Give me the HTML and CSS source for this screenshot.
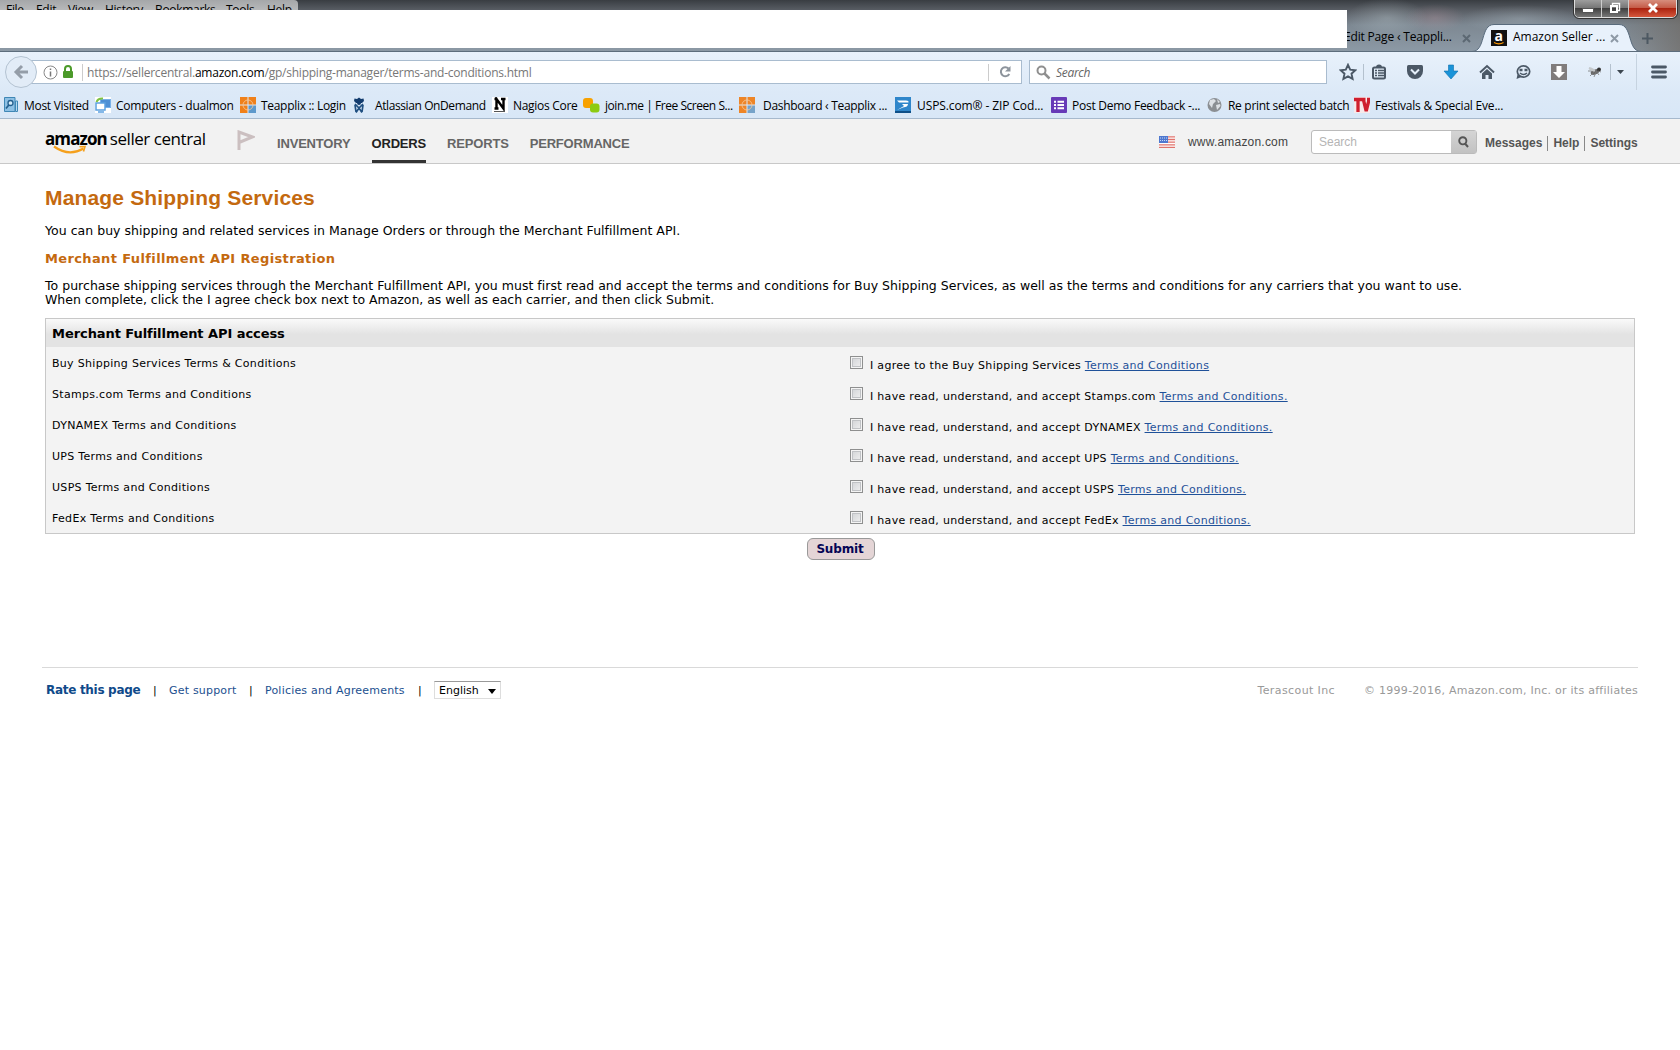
FILE: index.html
```
<!DOCTYPE html>
<html lang="en">
<head>
  <meta charset="UTF-8">
  <title>Amazon Seller Central</title>
  <link rel="stylesheet" href="styles.css">
</head>
<body>
  <div class="titlebar">
    <div class="menu">
      <span>File</span><span>Edit</span><span>View</span><span>History</span><span>Bookmarks</span><span>Tools</span><span>Help</span>
    </div>
    <div class="tabs">
      <div class="tab">
        <span class="tab-title edit">Edit Page ‹ Teappli...</span>
        <svg class="tab-close" width="9" height="9" viewBox="0 0 9 9"><path d="M1 1l7 7M8 1l-7 7"/></svg>
      </div>
      <div class="tab active">
        <svg class="tab-shape" width="170" height="28" viewBox="0 0 170 28">
          <path d="M0 27.5C14 27.5 8 .5 22 .5H147C161 .5 155 27.500 169 27.500V28H0Z" fill="#e8f1fb" stroke="#596b7c"/>
        </svg>
        <svg class="favicon" width="16" height="16" viewBox="0 0 16 16">
          <rect width="16" height="16" fill="#111"/>
          <text x="3.4" y="10.5" font-family="Open Sans" font-weight="700" font-size="14" fill="#fff">a</text>
          <path d="M3 12.5q5 2.6 9.500 0" fill="none" stroke="#f90" stroke-width="1.200"/>
        </svg>
        <span class="tab-title seller">Amazon Seller ...</span>
        <svg class="tab-close" width="9" height="9" viewBox="0 0 9 9"><path d="M1 1l7 7M8 1l-7 7"/></svg>
      </div>
      <svg class="new-tab" width="11" height="11" viewBox="0 0 11 11"><path d="M5.500 0v11M0 5.500h11"/></svg>
    </div>
    <div class="window-buttons">
      <span class="wb"><svg width="12" height="12" viewBox="0 0 12 12"><rect x=".5" y="6.500" width="11" height="4" fill="#fff" stroke="#555"/></svg></span>
      <span class="wb"><svg width="12" height="12" viewBox="0 0 12 12"><path d="M3.500 3V1.500h7v7H9" fill="none" stroke="#fff" stroke-width="1.400"/><rect x="2" y="4" width="6" height="6" fill="none" stroke="#fff" stroke-width="2"/></svg></span>
      <span class="wb wb-close"><svg width="12" height="12" viewBox="0 0 12 12"><path d="M2 2l8 8M10 2l-8 8" stroke="#fff" stroke-width="2.800"/></svg></span>
    </div>
    <div class="blank"></div>
  </div>

  <div class="toolbar">
    <div class="back">
      <svg width="16" height="16" viewBox="0 0 16 16"><path d="M9 2L3 8l6 6M3 8h12" fill="none" stroke="#949da8" stroke-width="3"/></svg>
    </div>
    <div class="urlbar">
      <svg class="info" width="15" height="15" viewBox="0 0 15 15"><circle cx="7.500" cy="7.500" r="6.500" fill="none" stroke="#888"/><path d="M7.500 3.500v1.600M7.500 6.500v5" stroke="#777" stroke-width="1.500"/></svg>
      <svg class="lock" width="12" height="14" viewBox="0 0 12 14"><path d="M3 7V4a3 3 0 0 1 6 0v3" fill="none" stroke="#4c9a2a" stroke-width="2"/><rect x="1" y="6" width="10" height="7" rx="1" fill="#4c9a2a"/></svg>
      <span class="url">https://sellercentral.<b>amazon.com</b>/gp/shipping-manager/terms-and-conditions.html</span>
      <span class="reload"><svg width="14" height="14" viewBox="0 0 14 14"><path d="M10.500 3.500A4.500 4.500 0 1 0 11.300 9" fill="none" stroke="#8d949c" stroke-width="2"/><path d="M12.500 1v5.500H7z" fill="#8d949c"/></svg></span>
    </div>
    <div class="searchbar">
      <svg width="15" height="15" viewBox="0 0 15 15"><circle cx="5.500" cy="5.500" r="4" fill="none" stroke="#8f8f8f" stroke-width="2"/><path d="M8.500 8.500l5 5" stroke="#8f8f8f" stroke-width="2.500"/></svg>
      <span>Search</span>
    </div>
    <div class="tools">
      <svg width="18" height="18" viewBox="0 0 18 18"><path d="M9 1.800l2.200 4.800 5.200.6-3.900 3.500 1.100 5.200L9 13.300l-4.600 2.600 1.100-5.200L1.600 7.200l5.200-.6z" fill="none" stroke="#4b5866" stroke-width="1.900"/></svg>
      <i class="sep s1"></i>
      <svg width="16" height="16" viewBox="0 0 16 16"><rect x="2" y="3.500" width="12" height="11" rx="1.500" fill="none" stroke="#4b5866" stroke-width="2"/><path d="M5 3.500a3 3 0 0 1 6 0z" fill="#4b5866"/><path d="M4 6.500h2M7 6.500h6M4 9h2M7 9h6M4 11.500h2M7 11.500h6" stroke="#4b5866" stroke-width="1.400"/></svg>
      <svg width="18" height="16" viewBox="0 0 18 16"><path d="M1 2.500q0-1.500 1.500-1.500h13q1.500 0 1.500 1.500V7a8 8 0 0 1-16 0z" fill="#4b5866"/><path d="M5 5.500l4 4 4-4" fill="none" stroke="#e5effa" stroke-width="2"/></svg>
      <svg width="16" height="16" viewBox="0 0 16 16"><path d="M5.500 1h5v6H15l-7 8-7-8h4.500z" fill="#1a93d8" stroke="#0a6fae" stroke-width=".6"/></svg>
      <svg width="16" height="16" viewBox="0 0 16 16"><path d="M1 8.500L8 2l7 6.500" fill="none" stroke="#4b5866" stroke-width="2"/><path d="M3 9.500L8 5l5 4.500V15H9.500v-4h-3v4H3z" fill="#4b5866"/></svg>
      <svg width="16" height="16" viewBox="0 0 16 16"><ellipse cx="8.500" cy="7.500" rx="6.200" ry="5.600" fill="none" stroke="#4b5866" stroke-width="1.700"/><path d="M2.500 10.500L1.500 15l5-2z" fill="#4b5866"/><path d="M4.500 6h3M9.500 6h3" stroke="#4b5866" stroke-width="2.500"/><path d="M5 9q3.500 3 7 0" fill="none" stroke="#4b5866" stroke-width="1.500"/></svg>
      <svg width="16" height="16" viewBox="0 0 16 16"><rect width="16" height="16" fill="#807c7c"/><path d="M5.500 2h5v6H14l-6 6-6-6h3.500z" fill="#fff"/></svg>
      <svg width="16" height="16" viewBox="0 0 16 16"><ellipse cx="8" cy="8" rx="4.500" ry="2.400" fill="#686868" transform="rotate(-20 8 8)"/><circle cx="12" cy="5.500" r="2" fill="#333"/><path d="M2 4l6 3M1 7l5 0M3 12l4-4M7 13l2-5M12 11l-3-4M14 8l-3-1" stroke="#777" stroke-width=".8"/><ellipse cx="5" cy="5.500" rx="3.500" ry="1.500" fill="#c4c8cb" transform="rotate(25 5 5.500)"/></svg>
      <i class="sep s2"></i>
      <svg class="drop" width="7" height="4" viewBox="0 0 7 4"><path d="M0 0h7L3.500 4z" fill="#3c4650"/></svg>
      <i class="sep s3"></i>
      <svg width="16" height="14" viewBox="0 0 16 14"><path d="M1.500 2h13M1.500 7h13M1.500 12h13" stroke="#4b5866" stroke-width="2.800" stroke-linecap="round"/></svg>
    </div>
  </div>

  <div class="bookmarks">
    <div class="bm"><svg width="15" height="16" viewBox="0 0 15 16"><path d="M.5.500H11v14H.5z" fill="#8dc0e4" stroke="#3f87b5"/><path d="M11.500 4h2v10.500h-2z" fill="#b7daf0" stroke="#3f87b5"/><circle cx="6.500" cy="6" r="2.500" fill="#d6ecfa" stroke="#235f8e" stroke-width="1.300"/><path d="M4.800 8L2 11.500" stroke="#235f8e" stroke-width="1.700"/></svg><span>Most Visited</span></div>
    <div class="bm"><svg width="16" height="16" viewBox="0 0 16 16"><rect width="16" height="16" fill="#fff"/><rect x="5.500" y="2.500" width="10" height="8" fill="#4d8fd4" stroke="#79b1e8"/><rect x="1" y="6" width="9" height="7" fill="#fff" stroke="#5ba1e0" stroke-width="1.500"/><path d="M3 15h6" stroke="#5ba1e0" stroke-width="1.500"/><path d="M1.500 5Q3 1 8 1.500" stroke="#7ec242" stroke-width="2" fill="none"/></svg><span>Computers - dualmon</span></div>
    <div class="bm"><svg width="16" height="16" viewBox="0 0 16 16"><path d="M0 0h7.500v7.500H0zM8.500 0H16v7.500H8.500zM0 8.500h7.500V16H0z" fill="#f08019"/><path d="M8.500 8.500H16V16H8.500z" fill="#5d99cc"/><circle cx="8" cy="8" r="5" fill="none" stroke="#f8c99a" stroke-width=".8"/></svg><span>Teapplix :: Login</span></div>
    <div class="bm"><svg width="16" height="16" viewBox="2 0 16 16"><path d="M3.500 1.500L6 2l2-1.500L10 2l2.500-.5.5 2.500-2 2H5L3 4z" fill="#123b6d"/><circle cx="8" cy="6" r="2" fill="#123b6d"/><path d="M4 7l4 4 4-4M5 15.500L8 11l3 4.500M4 8l1 7M12 8l-1 7" fill="none" stroke="#205081" stroke-width="1.700"/></svg><span>Atlassian OnDemand</span></div>
    <div class="bm"><svg width="16" height="16" viewBox="0 0 16 16"><rect width="16" height="16" fill="#fff"/><path d="M4.500 12V2l7 9.500V1.500M2.500 11.500h4M9 2h4.500M2.500 2h3" fill="none" stroke="#000" stroke-width="2.400"/><path d="M2 14.500h11" stroke="#555"/></svg><span>Nagios Core</span></div>
    <div class="bm"><svg width="17" height="16" viewBox="0 0 17 16"><rect x="0" y="1" width="10" height="10" rx="3" fill="#f7a100"/><rect x="7" y="6.500" width="9.500" height="9" rx="3" fill="#8ccb12"/></svg><span>join.me | Free Screen S...</span></div>
    <div class="bm"><svg width="16" height="16" viewBox="0 0 16 16"><path d="M0 0h7.500v7.500H0zM8.500 0H16v7.500H8.500zM0 8.500h7.500V16H0z" fill="#ee8526"/><path d="M8.500 8.500H16V16H8.500z" fill="#76a3c9"/><circle cx="8" cy="8" r="5" fill="none" stroke="#f8c99a" stroke-width=".8"/></svg><span>Dashboard ‹ Teapplix ...</span></div>
    <div class="bm"><svg width="16" height="16" viewBox="0 0 16 16"><rect width="16" height="16" fill="#2f86ca"/><path d="M2 3.500h9q3 0 2.500 2H4zM7 7h6q0 3-5 3.500L2 13l7-4z" fill="#fff"/><path d="M0 15h16" stroke="#0f5088" stroke-width="2"/></svg><span>USPS.com® - ZIP Cod...</span></div>
    <div class="bm"><svg width="16" height="16" viewBox="0 0 16 16"><rect width="16" height="16" rx="1" fill="#673ab7"/><path d="M3 4.700h2M6.500 4.700H13M3 8h2M6.500 8H13M3 11.300h2M6.500 11.300H13" stroke="#fff" stroke-width="2"/></svg><span>Post Demo Feedback -...</span></div>
    <div class="bm"><svg width="16" height="16" viewBox="0 0 16 16"><circle cx="7.500" cy="8" r="7" fill="#8b8f93"/><path d="M3 3l4-1 2 2-3 3-1 4-3-4zM9 8l4-1 .5 2L10 13zM10 2l3 3-2 1z" fill="#dde1e5"/></svg><span>Re print selected batch</span></div>
    <div class="bm"><svg width="16" height="16" viewBox="0 0 16 16"><rect width="16" height="16" fill="#f7e9ea"/><path d="M0 2.500h9M4 2.500V15M8.500 2.500h3M13 2.500h3M9.500 3l2.700 11L15 3" fill="none" stroke="#cf1f2e" stroke-width="3.300"/></svg><span>Festivals &amp; Special Eve...</span></div>
  </div>

  <div class="header">
    <div class="logo">
      <b>amazon</b><span>seller central</span>
      <svg class="smile" width="36" height="10" viewBox="0 0 36 10"><path d="M1 1.500Q16 12 30.500 3.500" fill="none" stroke="#f5a01c" stroke-width="2.200"/><path d="M26.500 1.800l5.500-.3-1.500 5" fill="none" stroke="#f5a01c" stroke-width="1.600"/></svg>
    </div>
    <svg class="flag" width="18" height="21" viewBox="0 0 18 21"><path d="M2 20V2l13.500 5L2 12.500" fill="none" stroke="#cbbfc0" stroke-width="3"/></svg>
    <div class="nav">
      <a>INVENTORY</a>
      <a class="current">ORDERS</a>
      <a>REPORTS</a>
      <a>PERFORMANCE</a>
    </div>
    <svg class="us" width="16" height="12" viewBox="0 0 16 12"><rect width="16" height="12" fill="#fff"/><path d="M0 .8h16M0 3.500h16M0 6.200h16M0 8.800h16M0 11.300h16" stroke="#e0736c" stroke-width="1.300"/><rect width="9" height="7" fill="#4f78cf"/><path d="M1 2h7M1 4.500h7" stroke="#c9d8f7" stroke-dasharray="1 1"/></svg>
    <span class="site">www.amazon.com</span>
    <div class="site-search">
      <span>Search</span>
      <div class="go"><svg width="11" height="12" viewBox="0 0 11 12"><circle cx="4.800" cy="4.800" r="3.600" fill="none" stroke="#555" stroke-width="1.900"/><path d="M7 7.500l3 3.500" stroke="#555" stroke-width="2"/></svg></div>
    </div>
    <div class="links"><a>Messages</a><a>Help</a><a>Settings</a></div>
  </div>

  <div class="content">
    <h1>Manage Shipping Services</h1>
    <p class="intro">You can buy shipping and related services in Manage Orders or through the Merchant Fulfillment API.</p>
    <h2>Merchant Fulfillment API Registration</h2>
    <p class="desc"><span class="l1">To purchase shipping services through the Merchant Fulfillment API, you must first read and accept the terms and conditions for Buy Shipping Services, as well as the terms and conditions for any carriers that you want to use.</span><br><span class="l2">When complete, click the I agree check box next to Amazon, as well as each carrier, and then click Submit.</span></p>

    <div class="panel">
      <div class="panel-head"><span>Merchant Fulfillment API access</span></div>
      <div class="row"><span class="name">Buy Shipping Services Terms &amp; Conditions</span><i class="check"></i><span class="agree">I agree to the Buy Shipping Services <a>Terms and Conditions</a></span></div>
      <div class="row"><span class="name">Stamps.com Terms and Conditions</span><i class="check"></i><span class="agree">I have read, understand, and accept Stamps.com <a>Terms and Conditions.</a></span></div>
      <div class="row"><span class="name">DYNAMEX Terms and Conditions</span><i class="check"></i><span class="agree">I have read, understand, and accept DYNAMEX <a>Terms and Conditions.</a></span></div>
      <div class="row"><span class="name">UPS Terms and Conditions</span><i class="check"></i><span class="agree">I have read, understand, and accept UPS <a>Terms and Conditions.</a></span></div>
      <div class="row"><span class="name">USPS Terms and Conditions</span><i class="check"></i><span class="agree">I have read, understand, and accept USPS <a>Terms and Conditions.</a></span></div>
      <div class="row"><span class="name">FedEx Terms and Conditions</span><i class="check"></i><span class="agree">I have read, understand, and accept FedEx <a>Terms and Conditions.</a></span></div>
    </div>
    <button class="submit">Submit</button>
  </div>

  <div class="footer">
    <a class="rate">Rate this page</a><i>|</i>
    <a class="support">Get support</a><i>|</i>
    <a class="policies">Policies and Agreements</a><i>|</i>
    <div class="lang"><span>English</span><svg width="8" height="5" viewBox="0 0 8 5"><path d="M0 0h8L4 5z"/></svg></div>
    <span class="company">Terascout Inc</span>
    <span class="copy">© 1999-2016, Amazon.com, Inc. or its affiliates</span>
  </div>
</body>
</html>
```
FILE: styles.css
```
* {
  box-sizing: border-box;
}

body {
  margin: 0;
  background: #fff;
  color: #000;
  font-family: "DejaVu Sans", sans-serif;
  font-size: 11px;
  height: 1050px;
  overflow: hidden;
}

svg {
  display: block;
  flex: none;
}

span, a {
  white-space: nowrap;
}

/* browser title bar */
.titlebar {
  position: relative;
  height: 52px;
  display: flex;
  align-items: flex-start;
  overflow: hidden;
  font: 12px "Open Sans", sans-serif;
  border-bottom: 1px solid #5d6d7c;
  background:
    radial-gradient(ellipse 60px 14px at 1520px 19px, rgba(190, 205, 215, .3), transparent),
    radial-gradient(ellipse 30px 14px at 1435px 18px, rgba(190, 150, 160, .3), transparent),
    radial-gradient(ellipse 40px 20px at 1387px 18px, rgba(200, 215, 220, .3), transparent),
    linear-gradient(90deg, transparent 1610px, rgba(110, 105, 100, .7) 1680px),
    linear-gradient(#393d42, #5b6067 11px, #7d8892 25px, #8c99a5 51px);
}

.menu {
  display: flex;
  width: 298px;
  height: 20px;
  padding-left: 6px;
  line-height: 20px;
  background: linear-gradient(#a5a7a9, #c9cacb);
  border-radius: 0 4px 0 0;
  letter-spacing: -.3px;
}

.menu span:nth-child(1) { width: 30px; }
.menu span:nth-child(2) { width: 32px; }
.menu span:nth-child(3) { width: 37px; }
.menu span:nth-child(4) { width: 50px; }
.menu span:nth-child(5) { width: 71px; }
.menu span:nth-child(6) { width: 41px; }

.blank {
  position: absolute;
  left: 0;
  top: 10px;
  width: 1347px;
  height: 38px;
  background: #fff;
}

.tabs {
  display: flex;
  align-items: center;
  height: 28px;
  margin: 24px 0 0 1046px;
}

.tab {
  position: relative;
  display: flex;
  align-items: center;
  height: 28px;
  line-height: 26px;
}

.tab-title {
  position: relative;
  align-self: flex-start;
}

.edit {
  width: 118px;
  letter-spacing: -.18px;
}

.seller { width: 97px; }

.tab-close path, .new-tab path {
  stroke: #5c6873;
  stroke-width: 2;
  fill: none;
}

.tab-close { position: relative; }

.active {
  padding-left: 21px;
  margin-left: -1px;
  width: 170px;
}

.active .tab-close path { stroke: #8e9aa6; }

.tab-shape {
  position: absolute;
  left: 2px;
  top: 0;
}

.favicon {
  position: relative;
  margin-right: 6px;
}

.new-tab {
  position: relative;
  margin-left: 2px;
}

.new-tab path { stroke: #4d5862; }

.window-buttons {
  position: absolute;
  right: 3px;
  top: -2px;
  display: flex;
  height: 20px;
  border: 1px solid #ddd;
  outline: 1px solid #333;
  border-radius: 0 0 5px 5px;
  overflow: hidden;
}

.wb {
  display: flex;
  align-items: center;
  justify-content: center;
  width: 27px;
  border-right: 1px solid #ccc;
  background: linear-gradient(#a2a2a2, #777 48%, #3c3c3c 50%, #777);
}

.wb-close {
  width: 47px;
  border: 0;
  background: linear-gradient(#d99484, #c55c48 48%, #a9200d 50%, #d5573c);
}

/* navigation toolbar */
.toolbar {
  display: flex;
  align-items: center;
  height: 40px;
  padding-left: 5px;
  background: linear-gradient(#e8f1fb, #dce9f7);
  font: 12px "Open Sans", sans-serif;
}

.back {
  position: relative;
  z-index: 1;
  display: flex;
  flex: none;
  align-items: center;
  justify-content: center;
  width: 32px;
  height: 32px;
  border: 1px solid #b4c3d2;
  border-radius: 50%;
  background: #e2ecf7;
}

.urlbar {
  display: flex;
  flex: none;
  align-items: center;
  width: 992px;
  height: 24px;
  margin-left: -7px;
  padding-left: 12px;
  border: 1px solid #a9bccf;
  background: #fff;
}

.lock { margin: 0 8px 0 4px; }

.url {
  flex: 1;
  padding-left: 4px;
  border-left: 1px solid #ccc;
  color: #777;
  letter-spacing: -.23px;
}

.url b {
  font-weight: 400;
  color: #000;
}

.reload {
  width: 33px;
  height: 17px;
  padding: 1px 0 0 9px;
  border-left: 1px solid #ccc;
}

.searchbar {
  display: flex;
  flex: none;
  align-items: center;
  gap: 5px;
  width: 298px;
  height: 24px;
  margin-left: 7px;
  padding-left: 6px;
  border: 1px solid #a9bccf;
  background: #fff;
  color: #666;
  font-style: italic;
  letter-spacing: -.3px;
}

.tools {
  display: flex;
  flex: none;
  align-items: center;
  margin-left: 12px;
  height: 40px;
}

.tools > svg { margin-right: 20px; }
.tools > svg:first-child { margin-right: 6px; }
.tools > svg:nth-child(4) { margin: 0 19px 0 -1px; }
.tools > svg:nth-child(9) { margin-right: 7px; }
.tools > svg:last-child { margin-right: 0; }

.sep {
  width: 1px;
  height: 16px;
  background: #b4c1ce;
}

.s1 { margin-right: 7px; }
.s2 { margin-right: 6px; }
.tools > .drop { margin-right: 12px; }

.s3 {
  height: 36px;
  margin-right: 14px;
  background: #c6d3e0;
}

.bookmarks {
  display: flex;
  align-items: center;
  height: 27px;
  padding-left: 4px;
  background: linear-gradient(#dce9f7, #d8e7f7);
  border-bottom: 1px solid #a6b9cd;
  font: 12px "Open Sans", sans-serif;
}

.bm {
  display: flex;
  align-items: center;
  flex: none;
  gap: 5px;
  width: 156px;
  letter-spacing: -.3px;
}

.bm:nth-child(1) { width: 91px; }
.bm:nth-child(2) { width: 145px; letter-spacing: -.25px; }
.bm:nth-child(3) { width: 113px; }
.bm:nth-child(4) { width: 139px; gap: 6px; letter-spacing: -.4px; }
.bm:nth-child(5) { width: 91px; }
.bm:nth-child(6) { letter-spacing: -.45px; }
.bm:nth-child(7) { gap: 8px; }
.bm:nth-child(8) { gap: 6px; letter-spacing: -.1px; }
.bm:nth-child(9) { letter-spacing: -.25px; }
.bm:nth-child(10) { width: 147px; }
.bm:nth-child(11) { letter-spacing: -.2px; }

/* seller central header */
.header {
  display: flex;
  height: 45px;
  padding-left: 45px;
  background: #f2f2f2;
  border-bottom: 1px solid #c8c8c8;
  font-family: "Liberation Sans", sans-serif;
}

.logo {
  position: relative;
  width: 192px;
  padding-top: 8px;
  font: 17px/24px "Open Sans", sans-serif;
  letter-spacing: -.9px;
}

.logo b { margin-right: 3px; }
.logo span { letter-spacing: -.45px; }

.smile {
  position: absolute;
  left: 8px;
  top: 26px;
}

.flag { margin-top: 11px; }

.nav {
  display: flex;
  gap: 21px;
  width: 882px;
  margin-left: 22px;
}

.nav a {
  height: 44px;
  padding-top: 17px;
  font-size: 13px;
  line-height: 15px;
  font-weight: bold;
  color: #666;
  letter-spacing: -.18px;
}

.nav .current {
  color: #222;
  border-bottom: 3px solid #333;
}

.us { margin-top: 17px; }

.site {
  width: 123px;
  margin: 15px 0 0 13px;
  font-size: 12px;
  line-height: 16px;
  color: #444;
  letter-spacing: .2px;
}

.site-search {
  display: flex;
  justify-content: space-between;
  width: 166px;
  height: 24px;
  margin-top: 11px;
  padding-left: 7px;
  border: 1px solid #bbb;
  border-radius: 3px;
  background: #fff;
  font-size: 12px;
  line-height: 23px;
  color: #b5b5b5;
}

.go {
  display: flex;
  align-items: center;
  justify-content: center;
  width: 25px;
  background: linear-gradient(#d4d4d4, #c2c2c2);
}

.links {
  display: flex;
  margin: 17px 0 0 8px;
  height: 15px;
  line-height: 15px;
  font-size: 12px;
  font-weight: bold;
  color: #555;
}

.links a + a {
  margin-left: 5px;
  padding-left: 5px;
  border-left: 1px solid #888;
}

/* page body */
.content {
  display: flex;
  flex-direction: column;
  padding: 0 45px;
}

h1 {
  margin: 22px 0 0;
  font: bold 21px/24px "Liberation Sans", sans-serif;
  letter-spacing: .16px;
  color: #c4690f;
}

.content p {
  margin: 0;
  font-size: 12.5px;
  line-height: 14px;
}

.content .intro {
  margin-top: 14px;
  letter-spacing: .03px;
}

h2 {
  margin: 13px 0 0;
  font-size: 13px;
  line-height: 16px;
  letter-spacing: .37px;
  color: #c4690f;
}

.content .desc { margin-top: 12px; }
.l1 { letter-spacing: .024px; }
.l2 { letter-spacing: -.028px; }

.panel {
  height: 216px;
  margin-top: 11px;
  border: 1px solid #c8c8c8;
  background: #f3f3f3;
}

.panel-head {
  height: 28px;
  padding-left: 6px;
  font-size: 13px;
  line-height: 30px;
  font-weight: bold;
  letter-spacing: -.06px;
  background: linear-gradient(#fafafa, #e3e3e3 55%, #e3e3e3);
}

.row {
  display: flex;
  height: 31px;
  padding: 9px 0 0 6px;
  line-height: 16px;
  letter-spacing: .3px;
}

.name { width: 798px; }

.check {
  width: 13px;
  height: 13px;
  border: 1px solid #8e8f8f;
  background: linear-gradient(135deg, #cfd1d4, #f2f2f2);
  box-shadow: inset 0 0 0 1px #f4f4f4, inset 0 0 0 2px #c0c2c5;
}

.agree {
  margin: 2px 0 0 7px;
}

.agree a {
  color: #1f5199;
  text-decoration: underline;
}

.submit {
  align-self: center;
  width: 68px;
  height: 22px;
  margin: 4px 0 0 2px;
  padding: 0 2px 0 0;
  border: 1px solid #999;
  border-radius: 6px;
  background: #e4d5d6;
  font: bold 12px "DejaVu Sans", sans-serif;
  letter-spacing: -.15px;
  color: #050555;
}

.footer {
  display: flex;
  align-items: baseline;
  height: 40px;
  margin: 107px 42px 0;
  padding: 13px 0 0 4px;
  border-top: 1px solid #d9d9d9;
}

.footer a {
  color: #1c508f;
  letter-spacing: .2px;
}

.footer i {
  width: 16px;
  font-style: normal;
}

.footer .rate {
  width: 107px;
  font-size: 12px;
  font-weight: bold;
  letter-spacing: -.3px;
  color: #0f4a8a;
}

.support { width: 80px; }
.policies { width: 153px; }

.lang {
  display: flex;
  align-items: center;
  gap: 9px;
  width: 67px;
  height: 18px;
  padding-left: 4px;
  border: 1px solid #ddd;
  border-top-color: #999;
}

.lang svg { margin-top: 3px; }

.company {
  margin-left: auto;
  letter-spacing: .4px;
  color: #999;
}

.copy {
  margin-left: 29px;
  letter-spacing: .26px;
  color: #999;
}
```
